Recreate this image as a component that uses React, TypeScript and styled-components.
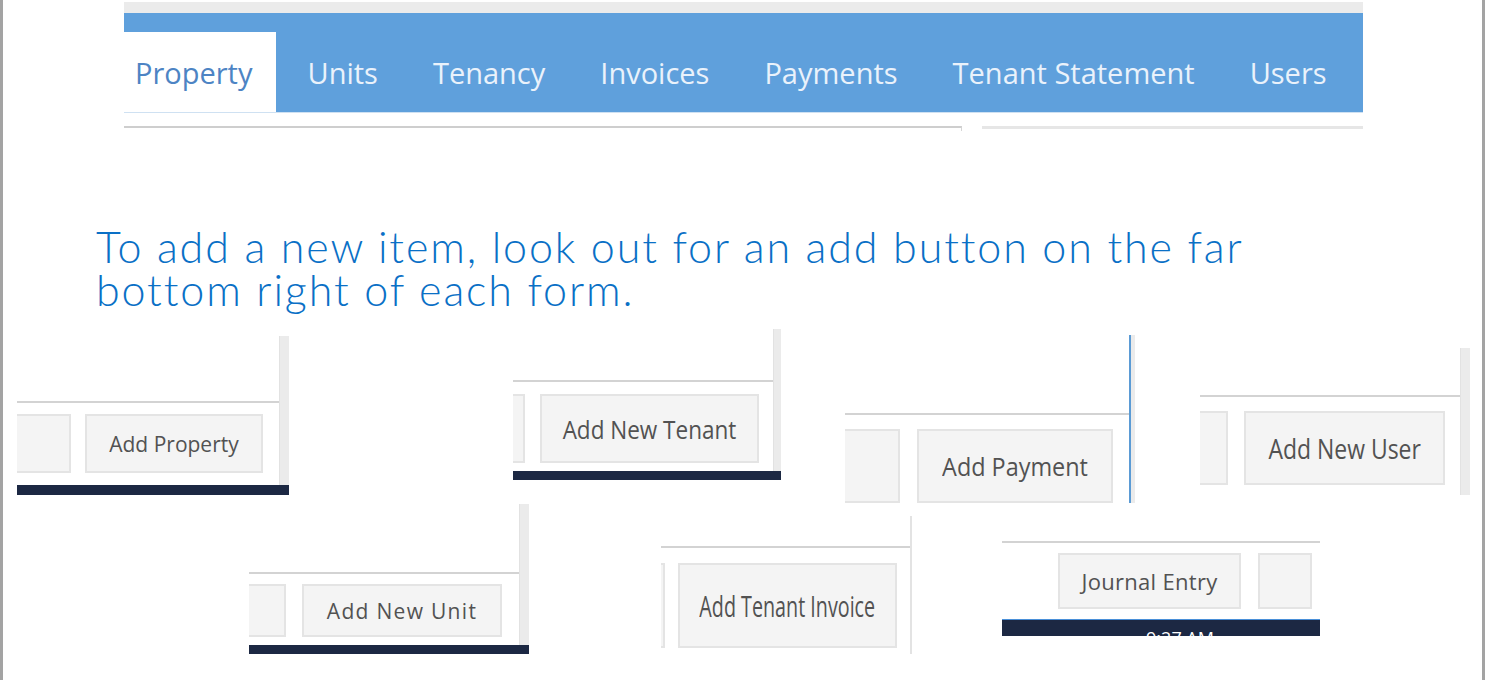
import React from "react";
import styled, { createGlobalStyle } from "styled-components";

const GlobalStyle = createGlobalStyle`
  html, body {
    margin: 0;
    padding: 0;
    background: #fff;
  }
  body {
    font-family: "Open Sans", "Liberation Sans", sans-serif;
  }
`;

const Slide = styled.div`
  position: relative;
  width: 1485px;
  height: 680px;
  box-sizing: border-box;
  border-left: 3px solid #a3a3a3;
  border-right: 3px solid #a3a3a3;
  background: #fff;
  overflow: hidden;
  display: flex;
  flex-direction: column;
`;

// top screenshot: the tab strip
const NavClip = styled.div`
  width: 1239px;
  margin-left: 121px;
  display: flex;
  flex-direction: column;
`;

const TopStrip = styled.div`
  margin-top: 2px;
  height: 11px;
  background: #ebebeb;
`;

const TabBar = styled.div`
  height: 99px;
  background: #5fa0dc;
  border-bottom: 1px solid #cfe1f2;
  display: flex;
  align-items: flex-end;
`;

const Tab = styled.div<{ $active?: boolean }>`
  height: 80px;
  display: flex;
  align-items: center;
  padding: ${(p) => (p.$active ? "0 23px 0 11px" : "0 23px 0 32px")};
  background: ${(p) => (p.$active ? "#fff" : "transparent")};
  color: ${(p) => (p.$active ? "#4d84c4" : "#eaf2fb")};
  font-size: 29px;
  white-space: nowrap;
`;

const Rules = styled.div`
  margin-top: 13px;
  display: flex;
  gap: 20px;
`;

const Rule = styled.div<{ $w?: number; $light?: boolean }>`
  ${(p) => (p.$w ? `width: ${p.$w}px;` : "flex: 1;")}
  height: ${(p) => (p.$light ? 4 : 5)}px;
  border-top: ${(p) => (p.$light ? "3px solid #e6e6e6" : "2px solid #cecece")};
  border-right: ${(p) => (p.$light ? "none" : "1px solid #d6d6d6")};
  box-sizing: border-box;
`;

const Heading = styled.h1`
  margin: 94px 0 0 93px;
  width: 1185px;
  font-family: Lato, "Open Sans", sans-serif;
  font-weight: 300;
  font-size: 43px;
  line-height: 43px;
  letter-spacing: 1.9px;
  color: #0a70c6;
`;

// cut-out screenshots of form footers
const Clip = styled.div<{ $x: number; $y: number; $w: number; $h: number }>`
  position: absolute;
  left: ${(p) => p.$x - 3}px;
  top: ${(p) => p.$y}px;
  width: ${(p) => p.$w}px;
  height: ${(p) => p.$h}px;
  background: #fff;
  display: flex;
  flex-direction: column;
  overflow: hidden;
`;

const ClipBody = styled.div`
  flex: 1;
  display: flex;
  min-height: 0;
`;

const FormArea = styled.div`
  flex: 1;
  display: flex;
  flex-direction: column;
`;

const Blank = styled.div<{ $h: number }>`
  height: ${(p) => p.$h}px;
  border-bottom: 2px solid #d3d3d3;
  flex-shrink: 0;
`;

const ButtonRow = styled.div<{ $mt: number; $gap: number; $pr: number }>`
  margin-top: ${(p) => p.$mt}px;
  display: flex;
  justify-content: flex-end;
  gap: ${(p) => p.$gap}px;
  padding-right: ${(p) => p.$pr}px;
`;

const Button = styled.div<{ $w: number; $h: number; $cut?: boolean }>`
  flex-shrink: 0;
  width: ${(p) => p.$w}px;
  height: ${(p) => p.$h}px;
  box-sizing: border-box;
  background: #f4f4f4;
  border: 2px solid #e4e4e4;
  border-left: ${(p) => (p.$cut ? "none" : "2px solid #e4e4e4")};
  display: flex;
  align-items: center;
  justify-content: center;
  margin-right: ${(p) => (p.$cut ? "auto" : "0")};
`;

const Label = styled.span<{ $size: number; $squash: number; $ls: number }>`
  display: inline-block;
  font-size: ${(p) => p.$size}px;
  color: #525252;
  white-space: nowrap;
  letter-spacing: ${(p) => p.$ls}px;
  transform: scaleX(${(p) => p.$squash});
`;

const Scroll = styled.div<{ $w: number; $kind: string }>`
  width: ${(p) => p.$w}px;
  flex-shrink: 0;
  box-sizing: border-box;
  background: ${(p) => (p.$kind === "line" ? "#e3e3e3" : "#ebebeb")};
  border-left: ${(p) =>
    p.$kind === "blue" ? "2px solid #5b9bd5" : p.$kind === "bar" ? "1px solid #e2e2e2" : "none"};
`;

const Footer = styled.div<{ $h: number; $accent?: boolean }>`
  height: ${(p) => p.$h}px;
  flex-shrink: 0;
  box-sizing: border-box;
  background: #1c2843;
  border-top: ${(p) => (p.$accent ? "1px solid #4a90d9" : "none")};
  overflow: hidden;
  display: flex;
  justify-content: center;
  padding: 9px 0 0 38px;
  color: #fff;
  font-size: 18px;
  line-height: 18px;
`;

type ClipSpec = {
  x: number;
  y: number;
  w: number;
  h: number;
  above: number;
  mt: number;
  gap: number;
  pr: number;
  partial?: number;
  label: string;
  bw: number;
  bh: number;
  size: number;
  squash?: number;
  ls?: number;
  extra?: number;
  scroll?: number;
  kind?: string;
  footer?: number;
  time?: string;
};

const clips: ClipSpec[] = [
  { x: 17, y: 336, w: 272, h: 159, above: 65, mt: 11, gap: 14, pr: 16, partial: 54, label: "Add Property", bw: 178, bh: 59, size: 21, scroll: 10, kind: "bar", footer: 10 },
  { x: 513, y: 329, w: 268, h: 151, above: 51, mt: 12, gap: 15, pr: 14, partial: 12, label: "Add New Tenant", bw: 219, bh: 69, size: 25, squash: 0.9, scroll: 8, kind: "bar", footer: 5 },
  { x: 845, y: 335, w: 290, h: 168, above: 78, mt: 14, gap: 17, pr: 16, partial: 55, label: "Add Payment", bw: 196, bh: 74, size: 26, squash: 0.9, scroll: 6, kind: "blue" },
  { x: 1200, y: 348, w: 270, h: 147, above: 47, mt: 14, gap: 16, pr: 15, partial: 28, label: "Add New User", bw: 201, bh: 74, size: 27, squash: 0.85, scroll: 10, kind: "bar" },
  { x: 249, y: 504, w: 280, h: 150, above: 68, mt: 10, gap: 16, pr: 17, partial: 37, label: "Add New Unit", bw: 200, bh: 53, size: 21, ls: 1.3, scroll: 10, kind: "bar", footer: 7 },
  { x: 661, y: 516, w: 251, h: 138, above: 30, mt: 15, gap: 13, pr: 13, partial: 4, label: "Add Tenant Invoice", bw: 219, bh: 85, size: 29, squash: 0.68, scroll: 2, kind: "line" },
  { x: 1002, y: 540, w: 318, h: 96, above: 1, mt: 10, gap: 17, pr: 8, label: "Journal Entry", bw: 183, bh: 56, size: 22, ls: 0.3, extra: 54, footer: 17, time: "9:27 AM" },
];

const tabs = ["Units", "Tenancy", "Invoices", "Payments", "Tenant Statement", "Users"];

const App = () => {
  return (
    <Slide>
      <GlobalStyle />
      <NavClip>
        <TopStrip />
        <TabBar>
          <Tab $active>Property</Tab>
          {tabs.map((t) => (
            <Tab key={t}>{t}</Tab>
          ))}
        </TabBar>
        <Rules>
          <Rule $w={838} />
          <Rule $light />
        </Rules>
      </NavClip>

      <Heading>
        To add a new item, look out for an add button on the far bottom right of each form.
      </Heading>

      {clips.map((c) => (
        <Clip key={c.label} $x={c.x} $y={c.y} $w={c.w} $h={c.h}>
          <ClipBody>
            <FormArea>
              <Blank $h={c.above} />
              <ButtonRow $mt={c.mt} $gap={c.gap} $pr={c.pr}>
                {c.partial ? <Button $cut $w={c.partial} $h={c.bh} /> : null}
                <Button $w={c.bw} $h={c.bh}>
                  <Label $size={c.size} $squash={c.squash ?? 1} $ls={c.ls ?? 0}>
                    {c.label}
                  </Label>
                </Button>
                {c.extra ? <Button $w={c.extra} $h={c.bh} /> : null}
              </ButtonRow>
            </FormArea>
            {c.scroll ? <Scroll $w={c.scroll} $kind={c.kind ?? "bar"} /> : null}
          </ClipBody>
          {c.footer ? (
            <Footer $h={c.footer} $accent={!!c.time}>
              {c.time}
            </Footer>
          ) : null}
        </Clip>
      ))}
    </Slide>
  );
};

export default App;
